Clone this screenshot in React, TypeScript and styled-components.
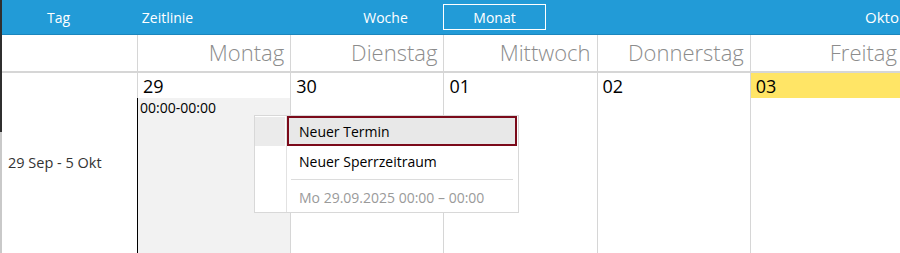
import styled, { createGlobalStyle } from "styled-components";

const GlobalStyle = createGlobalStyle`
  html, body {
    margin: 0;
    padding: 0;
    background: #ffffff;
    overflow: hidden;
  }
  body {
    font-family: "Open Sans", "Noto Sans", sans-serif;
  }
`

const Page = styled.div`
  position: relative;
  width: 900px;
  height: 253px;
  overflow: hidden;
  box-sizing: border-box;
  border-left: 2px solid;
  border-image: linear-gradient(to bottom, #2f2f2f 132px, #c9c9c9 132px) 1;
  display: flex;
  flex-direction: column;
`

const TopBar = styled.div`
  height: 34px;
  flex: none;
  background: #229bd7;
  border-bottom: 1px solid #1b86bd;
  display: flex;
  align-items: center;
  padding-left: 2px;
  white-space: nowrap;
  overflow: hidden;
`

const Tab = styled.div<{ $active?: boolean }>`
  height: 26px;
  flex: none;
  display: flex;
  align-items: center;
  justify-content: center;
  box-sizing: border-box;
  color: #ffffff;
  font-size: 14px;
  margin: 0 ${(p) => (p.$active ? 3 : 0)}px;
  width: ${(p) => (p.$active ? 103 : 109)}px;
  border: 1px solid ${(p) => (p.$active ? "#ffffff" : "transparent")};
`

const Title = styled.div`
  margin-left: 316px;
  color: #ffffff;
  font-size: 15px;
`

const Grid = styled.div`
  display: grid;
  grid-template-columns: 135px repeat(5, 153.2px);
  grid-template-rows: 38px 1fr;
  flex: 1;
`

const HeadCell = styled.div`
  height: 36px;
  border-bottom: 2px solid #d6d6d6;
  border-left: 1px solid #d6d6d6;
  &:first-child {
    border-left: none;
  }
  color: #8c8c8c;
  font-size: 22px;
  font-weight: 350;
  text-align: right;
  padding-right: 6px;
  line-height: 35px;
  box-sizing: content-box;
`

const WeekLabel = styled.div`
  display: flex;
  align-items: center;
  padding-left: 6px;
  padding-bottom: 2px;
  font-size: 14.5px;
  color: #333333;
`

const DayColumn = styled.div`
  display: flex;
  flex-direction: column;
  border-left: 1px solid #d6d6d6;
`

const DateCell = styled.div<{ $today?: boolean }>`
  height: 25px;
  flex: none;
  background: ${(p) => (p.$today ? "#ffe566" : "#ffffff")};
  color: #000000;
  font-size: 18px;
  line-height: 26px;
  padding-left: 5px;
`

const DayBody = styled.div<{ $selected?: boolean }>`
  flex: 1;
  background: ${(p) => (p.$selected ? "#f2f2f2" : "#ffffff")};
  margin-left: ${(p) => (p.$selected ? -1 : 0)}px;
  border-left: ${(p) => (p.$selected ? "1px solid #000000" : "none")};
  font-size: 14px;
  color: #000000;
  padding-left: 2px;
  line-height: 19px;
`

const Menu = styled.div`
  position: absolute;
  left: 252px;
  top: 115px;
  width: 265px;
  height: 98px;
  box-sizing: border-box;
  background: #ffffff;
  border: 1px solid #d8d8d8;
  display: flex;
`

const Gutter = styled.div`
  width: 31px;
  flex: none;
  border-right: 1px solid #e2e2e2;
  padding-top: 1px;
`

const GutterMark = styled.div`
  height: 29px;
  background: #ebebeb;
  margin-right: 1px;
`

const Items = styled.div`
  flex: 1;
  display: flex;
  flex-direction: column;
  padding-right: 1px;
`

const Item = styled.div<{ $active?: boolean; $disabled?: boolean }>`
  height: 30px;
  flex: none;
  box-sizing: border-box;
  display: flex;
  align-items: center;
  padding-left: 10px;
  font-size: 14px;
  color: ${(p) => (p.$disabled ? "#9a9a9a" : "#000000")};
  background: ${(p) => (p.$active ? "#e8e8e8" : "transparent")};
  border: 2px solid ${(p) => (p.$active ? "#7b0a1a" : "transparent")};
`

const Separator = styled.div`
  height: 1px;
  background: #dcdcdc;
  margin: 3px 4px 2px 4px;
`

const tabs = ["Tag", "Zeitlinie", "", "Woche"]

const days = [
  { name: "Montag", date: "29" },
  { name: "Dienstag", date: "30" },
  { name: "Mittwoch", date: "01" },
  { name: "Donnerstag", date: "02" },
  { name: "Freitag", date: "03" },
]

const App = () => {
  return (
    <>
      <GlobalStyle />
      <Page>
        <TopBar>
          {tabs.map((t, i) => (
            <Tab key={i}>{t}</Tab>
          ))}
          <Tab $active>Monat</Tab>
          <Title>Oktober 2025</Title>
        </TopBar>

        <Grid>
          <HeadCell />
          {days.map((d) => (
            <HeadCell key={d.name}>{d.name}</HeadCell>
          ))}

          <WeekLabel>29 Sep - 5 Okt</WeekLabel>
          {days.map((d, i) => (
            <DayColumn key={d.date}>
              <DateCell $today={i === 4}>{d.date}</DateCell>
              <DayBody $selected={i === 0}>{i === 0 && "00:00-00:00"}</DayBody>
            </DayColumn>
          ))}
        </Grid>

        <Menu>
          <Gutter>
            <GutterMark />
          </Gutter>
          <Items>
            <Item $active>Neuer Termin</Item>
            <Item>Neuer Sperrzeitraum</Item>
            <Separator />
            <Item $disabled>Mo 29.09.2025 00:00 – 00:00</Item>
          </Items>
        </Menu>
      </Page>
    </>
  )
}

export default App;
